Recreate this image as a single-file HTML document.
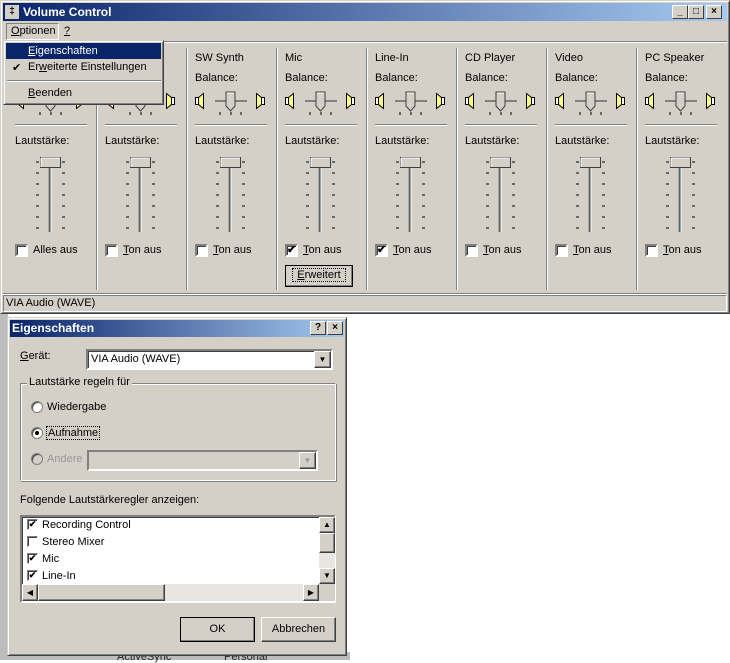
<!DOCTYPE html>
<html><head><meta charset="utf-8"><style>
*{margin:0;padding:0;box-sizing:border-box}
body{width:730px;height:660px;position:relative;overflow:hidden;background:#fff;font-family:"Liberation Sans",sans-serif;font-size:11px;color:#000}
.a{position:absolute}
.win{background:#d4d0c8}
.title{background:linear-gradient(90deg,#0a246a,#a6caf0);color:#fff;font-weight:bold;font-size:12px;line-height:18px}
.tb{width:16px;height:14px;background:#d4d0c8;border:1px solid;border-color:#fff #404040 #404040 #fff;font-size:10px;line-height:12px;text-align:center;color:#000;font-weight:bold}
.sunk{border:1px solid;border-color:#808080 #fff #fff #808080}
.vl{width:2px;border-left:1px solid #808080;border-right:1px solid #fff}
.hl{height:2px;border-top:1px solid #808080;border-bottom:1px solid #fff}
.cb{width:13px;height:13px;background:#fff;border:2px solid;border-color:#808080 #fff #fff #808080;box-shadow:inset 1px 1px 0 #404040;font-size:11px;line-height:9px;text-align:center;font-weight:bold}
.btn{background:#d4d0c8;border:1px solid;border-color:#fff #404040 #404040 #fff;box-shadow:inset -1px -1px 0 #808080;text-align:center}
.thumb{background:#d4d0c8;border:1px solid;border-color:#fff #404040 #404040 #fff;box-shadow:inset -1px -1px 0 #808080}
u{text-decoration:underline}
.radio{width:12px;height:12px;border-radius:50%;background:#fff;border:1px solid #808080;box-shadow:inset 1px 1px 0 #404040}
</style></head><body>
<div class="a" style="left:0;top:313px;width:8px;height:347px;background:#bdbdbd"></div>
<div class="a" style="left:0;top:652px;width:350px;height:8px;background:#bdbdbd"></div>
<div class="a" style="left:117px;top:651px;font-size:11px;color:#222">ActiveSync</div>
<div class="a" style="left:224px;top:651px;font-size:11px;color:#222">Personal</div>

<div class="a win" style="left:0;top:0;width:730px;height:314px;border:1px solid;border-color:#d4d0c8 #404040 #404040 #d4d0c8;box-shadow:inset 1px 1px 0 #fff,inset -1px -1px 0 #808080"></div>
<div class="a title" style="left:3px;top:3px;width:724px;height:18px"><span style="display:inline-block;width:14px;height:14px;background:#d4d0c8;margin:2px 4px 0 2px;vertical-align:top;color:#000;font-size:10px;line-height:14px;text-align:center">‡</span>Volume Control</div>
<div class="a tb" style="left:672px;top:5px">_</div>
<div class="a tb" style="left:688px;top:5px">□</div>
<div class="a tb" style="left:706px;top:5px">×</div>
<div class="a" style="left:6px;top:23px;width:53px;height:17px;border:1px solid;border-color:#808080 #fff #fff #808080"></div>
<div class="a" style="left:11px;top:25px"><u>O</u>ptionen</div>
<div class="a" style="left:64px;top:25px"><u>?</u></div>
<div class="a hl" style="left:3px;top:41px;width:724px"></div>

<div class="a vl" style="left:96px;top:48px;height:242px"></div>
<div class="a vl" style="left:186px;top:48px;height:242px"></div>
<div class="a vl" style="left:276px;top:48px;height:242px"></div>
<div class="a vl" style="left:366px;top:48px;height:242px"></div>
<div class="a vl" style="left:456px;top:48px;height:242px"></div>
<div class="a vl" style="left:546px;top:48px;height:242px"></div>
<div class="a vl" style="left:636px;top:48px;height:242px"></div>

<svg class="a" style="left:0;top:0" width="730" height="300">
<defs>
<g id="bal">
 <path d="M8.5 97.5h3v7h-3z" fill="#fff" stroke="#000"/><path d="M11.5 97.5l5-4v15l-5-4z" fill="#ffff80" stroke="#000"/>
 <path d="M77.5 97.5h-3v7h3z" fill="#fff" stroke="#000"/><path d="M74.5 97.5l-5-4v15l5-4z" fill="#ffff80" stroke="#000"/>
 <path d="M28 101h32" stroke="#808080" stroke-width="2"/>
 <path d="M39 92h9v14l-4.5 5l-4.5-5z" fill="#d4d0c8" stroke="#404040"/><path d="M40 93h7" stroke="#fff"/>
 <path d="M33 112v3M44 112v3M54 112v3" stroke="#000"/>
 <path d="M8 124.5h72" stroke="#808080"/><path d="M8 125.5h72" stroke="#fff"/>
</g>
<g id="vol">
 <path d="M42 163v69" stroke="#808080"/><path d="M43 163v69" stroke="#404040"/><path d="M44 163v69" stroke="#fff"/>
 <path d="M29 162h3M29 173h3M29 184h3M29 195h3M29 206h3M29 217h3M29 228h3M55 162h3M55 173h3M55 184h3M55 195h3M55 206h3M55 217h3M55 228h3" stroke="#000"/>
 <rect x="33.5" y="157.5" width="20" height="10" fill="#d4d0c8" stroke="#404040"/><path d="M34 158h19M34 158v9" stroke="#fff"/>
</g>
</defs>
<g transform="translate(97 0)"><use href="#bal"/><use href="#vol"/></g>
<g transform="translate(187 0)"><use href="#bal"/><use href="#vol"/></g>
<g transform="translate(277 0)"><use href="#bal"/><use href="#vol"/></g>
<g transform="translate(367 0)"><use href="#bal"/><use href="#vol"/></g>
<g transform="translate(457 0)"><use href="#bal"/><use href="#vol"/></g>
<g transform="translate(547 0)"><use href="#bal"/><use href="#vol"/></g>
<g transform="translate(637 0)"><use href="#bal"/><use href="#vol"/></g>
<g transform="translate(7 0)"><use href="#bal"/><use href="#vol"/></g>
</svg>

<div class="a" style="left:195px;top:52px">SW Synth</div>
<div class="a" style="left:285px;top:52px">Mic</div>
<div class="a" style="left:375px;top:52px">Line-In</div>
<div class="a" style="left:465px;top:52px">CD Player</div>
<div class="a" style="left:555px;top:52px">Video</div>
<div class="a" style="left:645px;top:52px">PC Speaker</div>
<div class="a" style="left:195px;top:72px">Balance:</div>
<div class="a" style="left:285px;top:72px">Balance:</div>
<div class="a" style="left:375px;top:72px">Balance:</div>
<div class="a" style="left:465px;top:72px">Balance:</div>
<div class="a" style="left:555px;top:72px">Balance:</div>
<div class="a" style="left:645px;top:72px">Balance:</div>

<div class="a" style="left:15px;top:135px">Lautstärke:</div>
<div class="a" style="left:105px;top:135px">Lautstärke:</div>
<div class="a" style="left:195px;top:135px">Lautstärke:</div>
<div class="a" style="left:285px;top:135px">Lautstärke:</div>
<div class="a" style="left:375px;top:135px">Lautstärke:</div>
<div class="a" style="left:465px;top:135px">Lautstärke:</div>
<div class="a" style="left:555px;top:135px">Lautstärke:</div>
<div class="a" style="left:645px;top:135px">Lautstärke:</div>

<div class="a cb" style="left:15px;top:244px"></div><div class="a" style="left:33px;top:244px">Alles aus</div>
<div class="a cb" style="left:105px;top:244px"></div><div class="a" style="left:123px;top:244px"><u>T</u>on aus</div>
<div class="a cb" style="left:195px;top:244px"></div><div class="a" style="left:213px;top:244px"><u>T</u>on aus</div>
<div class="a cb" style="left:285px;top:244px">✔</div><div class="a" style="left:303px;top:244px"><u>T</u>on aus</div>
<div class="a cb" style="left:375px;top:244px">✔</div><div class="a" style="left:393px;top:244px"><u>T</u>on aus</div>
<div class="a cb" style="left:465px;top:244px"></div><div class="a" style="left:483px;top:244px"><u>T</u>on aus</div>
<div class="a cb" style="left:555px;top:244px"></div><div class="a" style="left:573px;top:244px"><u>T</u>on aus</div>
<div class="a cb" style="left:645px;top:244px"></div><div class="a" style="left:663px;top:244px"><u>T</u>on aus</div>
<div class="a btn" style="left:285px;top:265px;width:68px;height:22px;border:1px solid #000;line-height:18px"><span style="border:1px dotted #000;padding:0 4px"><u>E</u>rweitert</span></div>

<div class="a hl" style="left:3px;top:293px;width:724px"></div>
<div class="a sunk" style="left:3px;top:295px;width:724px;height:17px;line-height:14px;padding-left:2px">VIA Audio (WAVE)</div>

<div class="a" style="left:3px;top:40px;width:161px;height:65px;background:#d4d0c8;border:1px solid;border-color:#d4d0c8 #404040 #404040 #d4d0c8;box-shadow:inset 1px 1px 0 #fff,inset -1px -1px 0 #808080"></div>
<div class="a" style="left:6px;top:43px;width:155px;height:16px;background:#0a246a;color:#fff;line-height:16px;padding-left:22px"><u>E</u>igenschaften</div>
<div class="a" style="left:12px;top:61px;font-size:11px">✔</div>
<div class="a" style="left:28px;top:61px">Er<u>w</u>eiterte Einstellungen</div>
<div class="a hl" style="left:7px;top:80px;width:154px"></div>
<div class="a" style="left:28px;top:87px"><u>B</u>eenden</div>

<div class="a win" style="left:7px;top:317px;width:340px;height:339px;border:1px solid;border-color:#d4d0c8 #404040 #404040 #d4d0c8;box-shadow:inset 1px 1px 0 #fff,inset -1px -1px 0 #808080"></div>
<div class="a title" style="left:10px;top:320px;width:334px;height:17px;line-height:16px;padding-left:2px">Eigenschaften</div>
<div class="a tb" style="left:310px;top:321px">?</div>
<div class="a tb" style="left:327px;top:321px">×</div>
<div class="a" style="left:20px;top:350px"><u>G</u>erät:</div>
<div class="a" style="left:86px;top:349px;width:247px;height:21px;background:#fff;border:2px solid;border-color:#808080 #fff #fff #808080;box-shadow:inset 1px 1px 0 #404040;line-height:17px;padding-left:3px">VIA Audio (WAVE)</div>
<div class="a btn" style="left:314px;top:351px;width:17px;height:17px;font-size:8px;line-height:15px">▼</div>

<div class="a" style="left:20px;top:383px;width:316px;height:98px;border:1px solid;border-color:#808080 #fff #fff #808080;box-shadow:inset 1px 1px 0 #fff,1px 1px 0 #808080"></div>
<div class="a" style="left:27px;top:376px;background:#d4d0c8;padding:0 2px">Lautstärke regeln für</div>
<div class="a radio" style="left:31px;top:401px"></div><div class="a" style="left:47px;top:401px">Wiedergabe</div>
<div class="a radio" style="left:31px;top:427px"><div style="width:4px;height:4px;background:#000;border-radius:50%;margin:3px"></div></div><div class="a" style="left:46px;top:426px;border:1px dotted #000;padding:0 1px">Aufnahme</div>
<div class="a radio" style="left:31px;top:453px;background:#d4d0c8"></div><div class="a" style="left:47px;top:453px;color:#999">Andere</div>
<div class="a" style="left:87px;top:450px;width:231px;height:21px;border:2px solid;border-color:#808080 #fff #fff #808080;background:#d4d0c8"></div>
<div class="a btn" style="left:299px;top:452px;width:17px;height:17px;font-size:8px;line-height:15px;color:#999">▼</div>

<div class="a" style="left:20px;top:494px">Folgende Lautstärkeregler anzeigen:</div>
<div class="a" style="left:20px;top:515px;width:316px;height:88px;background:#fff;border:2px solid;border-color:#808080 #fff #fff #808080;box-shadow:inset 1px 1px 0 #404040"></div>
<div class="a cb" style="left:27px;top:519px;width:11px;height:11px;border-width:1px;line-height:9px;font-size:9px">✔</div><div class="a" style="left:42px;top:519px">Recording Control</div>
<div class="a cb" style="left:27px;top:536px;width:11px;height:11px;border-width:1px"></div><div class="a" style="left:42px;top:536px">Stereo Mixer</div>
<div class="a cb" style="left:27px;top:553px;width:11px;height:11px;border-width:1px;line-height:9px;font-size:9px">✔</div><div class="a" style="left:42px;top:553px">Mic</div>
<div class="a cb" style="left:27px;top:570px;width:11px;height:11px;border-width:1px;line-height:9px;font-size:9px">✔</div><div class="a" style="left:42px;top:570px">Line-In</div>
<div class="a" style="left:319px;top:517px;width:16px;height:67px;background:#e8e6e0"></div>
<div class="a btn" style="left:319px;top:517px;width:16px;height:16px;font-size:8px;line-height:14px">▲</div>
<div class="a thumb" style="left:319px;top:533px;width:16px;height:20px"></div>
<div class="a btn" style="left:319px;top:568px;width:16px;height:16px;font-size:8px;line-height:14px">▼</div>
<div class="a" style="left:22px;top:584px;width:297px;height:17px;background:#e8e6e0"></div>
<div class="a btn" style="left:22px;top:584px;width:16px;height:17px;font-size:8px;line-height:15px">◀</div>
<div class="a thumb" style="left:38px;top:584px;width:127px;height:17px"></div>
<div class="a btn" style="left:303px;top:584px;width:16px;height:17px;font-size:8px;line-height:15px">▶</div>
<div class="a" style="left:319px;top:584px;width:16px;height:17px;background:#d4d0c8"></div>

<div class="a btn" style="left:180px;top:617px;width:75px;height:25px;border:1px solid #000;line-height:22px">OK</div>
<div class="a btn" style="left:261px;top:617px;width:75px;height:25px;line-height:22px">Abbrechen</div>
</body></html>
